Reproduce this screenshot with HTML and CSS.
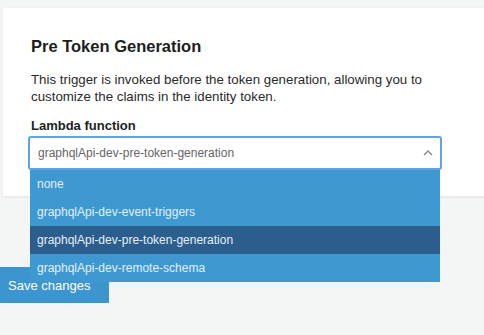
FILE: index.html
```html
<!DOCTYPE html>
<html lang="en">
<head>
    <meta charset="UTF-8">
    <meta name="viewport" content="width=device-width, initial-scale=1.0">
    <title>Pre Token Generation</title>
    <link rel="stylesheet" href="styles.css">
</head>
<body>
    <div class="card">
        <h2>Pre Token Generation</h2>
        <p class="desc">This trigger is invoked before the token generation, allowing you to customize the claims in the identity token.</p>
        <label class="label">Lambda function</label>
        <div class="select">
            <span class="select-value">graphqlApi-dev-pre-token-generation</span>
            <svg class="chevron" width="10" height="6" viewBox="0 0 10 6">
                <path d="M1 5 L5 1 L9 5" fill="none" stroke="#888" stroke-width="1.3"/>
            </svg>
            <ul class="options">
                <li>none</li>
                <li>graphqlApi-dev-event-triggers</li>
                <li class="selected">graphqlApi-dev-pre-token-generation</li>
                <li>graphqlApi-dev-remote-schema</li>
            </ul>
        </div>
    </div>
    <button class="save-btn">Save changes</button>
</body>
</html>
```

FILE: styles.css
```css
* {
    margin: 0;
    padding: 0;
    box-sizing: border-box;
    font-family: "Liberation Sans", Arial, sans-serif;
}
body {
    background-color: #f4f6f6;
    overflow: hidden;
}
.card {
    background-color: #fff;
    margin: 8px -20px 0 3px;
    padding: 29px 28px 26px;
    box-shadow: 0 1px 3px rgba(0, 0, 0, 0.08);
}
h2 {
    font-size: 16.5px;
    line-height: 19px;
    color: #1e1e1e;
    margin-bottom: 15px;
}
.desc {
    max-width: 396px;
    font-size: 13.3px;
    line-height: 17px;
    color: #2a2a2a;
    margin-bottom: 13px;
}
.label {
    display: block;
    font-size: 13px;
    font-weight: bold;
    line-height: 16px;
    color: #1e1e1e;
    margin-bottom: 2px;
}
.select {
    position: relative;
    display: flex;
    align-items: center;
    justify-content: space-between;
    width: 414px;
    height: 34px;
    margin-left: -3px;
    padding: 0 7px 0 8px;
    border: 2px solid #62a3e8;
    border-radius: 3px;
    background-color: #fff;
}
.select-value {
    font-size: 12px;
    color: #666;
}
.options {
    position: absolute;
    top: 32px;
    left: 0;
    width: 410px;
    list-style: none;
    background-color: #3f99d1;
}
.options li {
    height: 28px;
    line-height: 28px;
    padding-left: 7px;
    font-size: 12px;
    color: #e3eef7;
}
.options li.selected {
    background-color: #2b5e8d;
}
.save-btn {
    display: block;
    margin-top: 71px;
    width: 109px;
    height: 36px;
    padding-left: 8px;
    text-align: left;
    font-size: 13px;
    color: #fff;
    background-color: #3c95cf;
    border: none;
}
```
